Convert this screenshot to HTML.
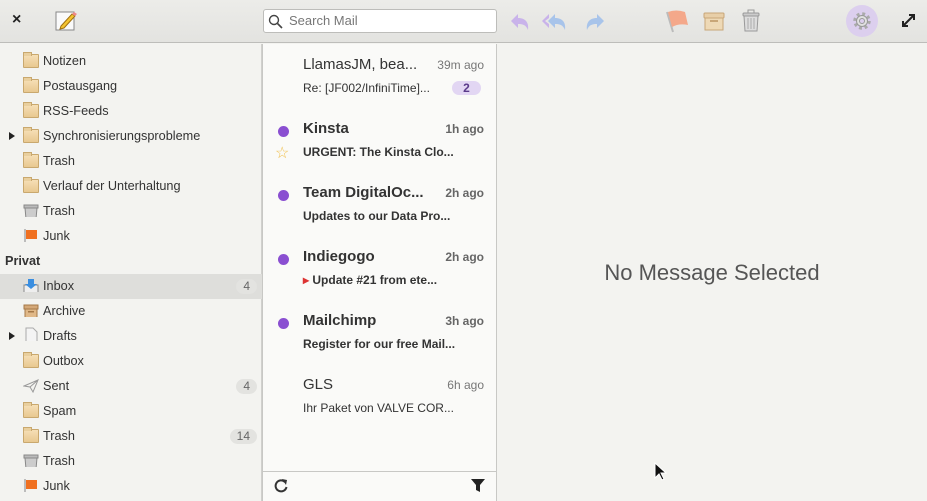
<!DOCTYPE html><html><head><style>
*{box-sizing:border-box;margin:0;padding:0}
body{width:927px;height:501px;overflow:hidden;font-family:"Liberation Sans",sans-serif;background:#f3f3f0;position:relative;color:#333}
.hdr{position:absolute;left:0;top:0;width:927px;height:43px;background:linear-gradient(#ecece9,#e3e3e0);border-bottom:1px solid #bdbdba}
.side{position:absolute;left:0;top:44px;width:262px;height:457px;background:#f3f3f0;border-right:1px solid #d0d0cd}
.row{position:absolute;left:0;width:262px;height:25px;font-size:12.7px;line-height:25px;color:#333}
.row .t{position:absolute;left:43px}
.ic{position:absolute;left:23px;top:5px;width:16px;height:14px}
.fold{background:linear-gradient(#f6dfb6,#e8c890);border:1px solid #c9a86e;border-radius:1px}
.fold:before{content:"";position:absolute;left:-1px;top:-3px;width:7px;height:3px;background:#e9cf9e;border:1px solid #c9a86e;border-bottom:none}
.badge{position:absolute;right:5px;top:5px;height:15px;line-height:15px;font-size:12px;padding:0 7px;background:#e3e3e0;border-radius:8px;color:#666}
.arr{position:absolute;left:9px;top:8px;width:0;height:0;border-left:6px solid #222;border-top:4.5px solid transparent;border-bottom:4.5px solid transparent}
.list{position:absolute;left:262px;top:44px;width:235px;height:457px;background:#fafaf8;border-left:1px solid #c8c8c5;border-right:1px solid #c8c8c5}
.msg{position:absolute;left:0;width:233px;height:64px}
.msg .n{position:absolute;left:40px;top:12px;font-size:15px;color:#333}
.msg .d{position:absolute;right:12px;top:14px;font-size:12px;color:#777}
.msg .s{position:absolute;left:40px;top:37px;font-size:12px;color:#333}
.msg.b .n,.msg.b .s{font-weight:bold}.msg.b .d{font-weight:bold;color:#666}
.dot{position:absolute;left:15px;top:18px;width:11px;height:11px;border-radius:50%;background:#8a4fd1}
.foot{position:absolute;left:0;top:427px;width:233px;height:30px;border-top:1px solid #c8c8c5;background:#fafaf8}
.search{position:absolute;left:263px;top:9px;width:234px;height:24px;background:#fff;border:1px solid #bdbdba;border-radius:3px;font-size:13px;color:#777;line-height:22px;padding-left:25px}
</style></head><body>
<div class="hdr">
<div style="position:absolute;left:12px;top:11px;font-size:16px;font-weight:bold;color:#222">×</div>
<svg style="position:absolute;left:55px;top:10px" width="22" height="22"><rect x="1" y="2" width="18" height="18" fill="#fafafa" stroke="#888"/><path d="M6 16 L17 4 L20 6 L9 18 L5 19Z" fill="#f4c430" stroke="#a07010"/><path d="M17 4 L19 2 L22 4 L20 6Z" fill="#e88"/></svg>
<div class="search">Search Mail</div>
<svg style="position:absolute;left:268px;top:14px" width="15" height="15"><circle cx="6" cy="6" r="4.5" fill="none" stroke="#444" stroke-width="1.4"/><path d="M9.5 9.5 L14 14" stroke="#444" stroke-width="1.6"/></svg>
<svg style="position:absolute;left:508px;top:10px" width="100" height="24"><path d="M3 11 L10 4 V8 C18 8 21 13 20 20 C18 15 15 14 10 14 V18Z" fill="#c9b3ea"/><path d="M40 11 L47 4 V8 C55 8 58 13 57 20 C55 15 52 14 47 14 V18Z" fill="#a8c4ea"/><path d="M34 11 L41 4 V8 L37 11 L41 14 V18Z" fill="#c9b3ea"/><path d="M98 11 L91 4 V8 C83 8 80 13 81 20 C83 15 86 14 91 14 V18Z" fill="#a8c4ea" transform="translate(-2 0)"/></svg>
<svg style="position:absolute;left:664px;top:8px" width="26" height="26"><path d="M3 4 L9 24" stroke="#bbb" stroke-width="2"/><path d="M4 4 Q12 1 21 4 L24 17 Q15 15 8 19Z" fill="#f4a88a"/></svg>
<svg style="position:absolute;left:703px;top:10px" width="22" height="22"><rect x="1" y="3" width="20" height="5" rx="1" fill="#e8cfa8" stroke="#c8a678"/><rect x="2" y="8" width="18" height="12" fill="#eed9b6" stroke="#c8a678"/><rect x="7" y="10" width="8" height="2" fill="#c8a678"/></svg>
<svg style="position:absolute;left:741px;top:9px" width="20" height="24"><rect x="2" y="4" width="16" height="3" rx="1" fill="#ccc" stroke="#999"/><path d="M3 7 L4 22 H16 L17 7Z" fill="#ddd" stroke="#999"/><path d="M7 9 V20 M10 9 V20 M13 9 V20" stroke="#aaa"/><rect x="7" y="1" width="6" height="3" fill="none" stroke="#999"/></svg>
<div style="position:absolute;left:846px;top:5px;width:32px;height:32px;border-radius:50%;background:#dccfee"></div>
<svg style="position:absolute;left:851px;top:10px" width="22" height="22"><circle cx="11" cy="11" r="7" fill="none" stroke="#aaa" stroke-width="3.5" stroke-dasharray="2.8 2.7"/><circle cx="11" cy="11" r="5.5" fill="#e0e0e0" stroke="#999"/><circle cx="11" cy="11" r="2.5" fill="#dccfee" stroke="#999"/></svg>
<svg style="position:absolute;left:901px;top:13px" width="15" height="15"><path d="M2 13 L13 2 M8 2 H13 V7 M2 8 V13 H7" stroke="#222" stroke-width="2" fill="none"/></svg>
</div>
<div class="side">
<div class="row" style="top:5px"><div class="ic fold"></div><span class="t">Notizen</span></div>
<div class="row" style="top:30px"><div class="ic fold"></div><span class="t">Postausgang</span></div>
<div class="row" style="top:55px"><div class="ic fold"></div><span class="t">RSS-Feeds</span></div>
<div class="row" style="top:80px"><div class="arr"></div><div class="ic fold"></div><span class="t">Synchronisierungsprobleme</span></div>
<div class="row" style="top:105px"><div class="ic fold"></div><span class="t">Trash</span></div>
<div class="row" style="top:130px"><div class="ic fold"></div><span class="t">Verlauf der Unterhaltung</span></div>
<div class="row" style="top:155px"><svg class="ic" style="top:4px" width="16" height="17"><rect x="1" y="2" width="14" height="3" fill="#bbb" stroke="#888"/><path d="M2 5 L3 16 H13 L14 5Z" fill="#ccc" stroke="#888"/></svg><span class="t">Trash</span></div>
<div class="row" style="top:180px"><svg class="ic" style="top:4px" width="16" height="17"><path d="M2 1 V16" stroke="#aaa" stroke-width="1.5"/><path d="M3 2 H14 V11 H3Z" fill="#f07020"/></svg><span class="t">Junk</span></div>
<div class="row" style="top:205px;font-weight:bold"><span style="position:absolute;left:5px">Privat</span></div>
<div class="row" style="top:230px;background:#dededb"><svg class="ic" style="top:4px" width="16" height="17"><rect x="1" y="7" width="14" height="9" fill="#eee" stroke="#888"/><path d="M5 1 H11 V6 H14 L8 11 L2 6 H5Z" fill="#3a8ee0"/></svg><span class="t">Inbox</span><span class="badge">4</span></div>
<div class="row" style="top:255px"><svg class="ic" style="top:4px" width="16" height="17"><rect x="1" y="2" width="14" height="4" fill="#d4a878" stroke="#a47848"/><rect x="2" y="6" width="12" height="9" fill="#e0b888" stroke="#a47848"/><rect x="5" y="8" width="6" height="1.5" fill="#a47848"/></svg><span class="t">Archive</span></div>
<div class="row" style="top:280px"><div class="arr"></div><svg class="ic" style="top:3px" width="16" height="19"><path d="M3 1 H10 L14 5 V18 H3Z" fill="#f4f4f4" stroke="#aaa"/></svg><span class="t">Drafts</span></div>
<div class="row" style="top:305px"><div class="ic fold"></div><span class="t">Outbox</span></div>
<div class="row" style="top:330px"><svg class="ic" style="top:5px" width="16" height="14"><path d="M1 7 L15 1 L10 13 L7 8Z M7 8 L15 1" fill="none" stroke="#999"/></svg><span class="t">Sent</span><span class="badge">4</span></div>
<div class="row" style="top:355px"><div class="ic fold"></div><span class="t">Spam</span></div>
<div class="row" style="top:380px"><div class="ic fold"></div><span class="t">Trash</span><span class="badge">14</span></div>
<div class="row" style="top:405px"><svg class="ic" style="top:4px" width="16" height="17"><rect x="1" y="2" width="14" height="3" fill="#bbb" stroke="#888"/><path d="M2 5 L3 16 H13 L14 5Z" fill="#ccc" stroke="#888"/></svg><span class="t">Trash</span></div>
<div class="row" style="top:430px"><svg class="ic" style="top:4px" width="16" height="17"><path d="M2 1 V16" stroke="#aaa" stroke-width="1.5"/><path d="M3 2 H14 V11 H3Z" fill="#f07020"/></svg><span class="t">Junk</span></div>
</div>
<div class="list">
<div class="msg" style="top:0"><span class="n">LlamasJM, bea...</span><span class="d">39m ago</span><span class="s">Re: [JF002/InfiniTime]...</span><span style="position:absolute;right:15px;top:37px;width:29px;height:14px;border-radius:7px;background:#e2d6f3;color:#5a3a8a;font-size:12px;font-weight:bold;text-align:center;line-height:14px">2</span></div>
<div class="msg b" style="top:64px"><div class="dot"></div><span class="n">Kinsta</span><span class="d">1h ago</span><span style="position:absolute;left:12px;top:35px;color:#f0c050;font-size:16px">☆</span><span class="s">URGENT: The Kinsta Clo...</span></div>
<div class="msg b" style="top:128px"><div class="dot"></div><span class="n">Team DigitalOc...</span><span class="d">2h ago</span><span class="s">Updates to our Data Pro...</span></div>
<div class="msg b" style="top:192px"><div class="dot"></div><span class="n">Indiegogo</span><span class="d">2h ago</span><span class="s"><span style="color:#d33">&#9656;</span> Update #21 from ete...</span></div>
<div class="msg b" style="top:256px"><div class="dot"></div><span class="n">Mailchimp</span><span class="d">3h ago</span><span class="s">Register for our free Mail...</span></div>
<div class="msg" style="top:320px"><span class="n">GLS</span><span class="d">6h ago</span><span class="s">Ihr Paket von VALVE COR...</span></div>
<div class="foot">
<svg style="position:absolute;left:11px;top:6px" width="14" height="15"><path d="M11 4 A5.5 5.5 0 1 0 12.5 9" fill="none" stroke="#333" stroke-width="2"/><path d="M8 1 L13 2 L12 7Z" fill="#333"/></svg>
<svg style="position:absolute;left:208px;top:7px" width="14" height="14"><path d="M0 0 H14 L9 6 V13 L5 11 V6Z" fill="#222"/></svg>
</div>
</div>
<div style="position:absolute;left:497px;top:260px;width:430px;text-align:center;font-size:22px;color:#555">No Message Selected</div>
<svg style="position:absolute;left:654px;top:462px" width="14" height="20"><path d="M1 1 V16 L5 12 L8 18 L10 17 L7 11 H12Z" fill="#111" stroke="#fff"/></svg>
</body></html>
